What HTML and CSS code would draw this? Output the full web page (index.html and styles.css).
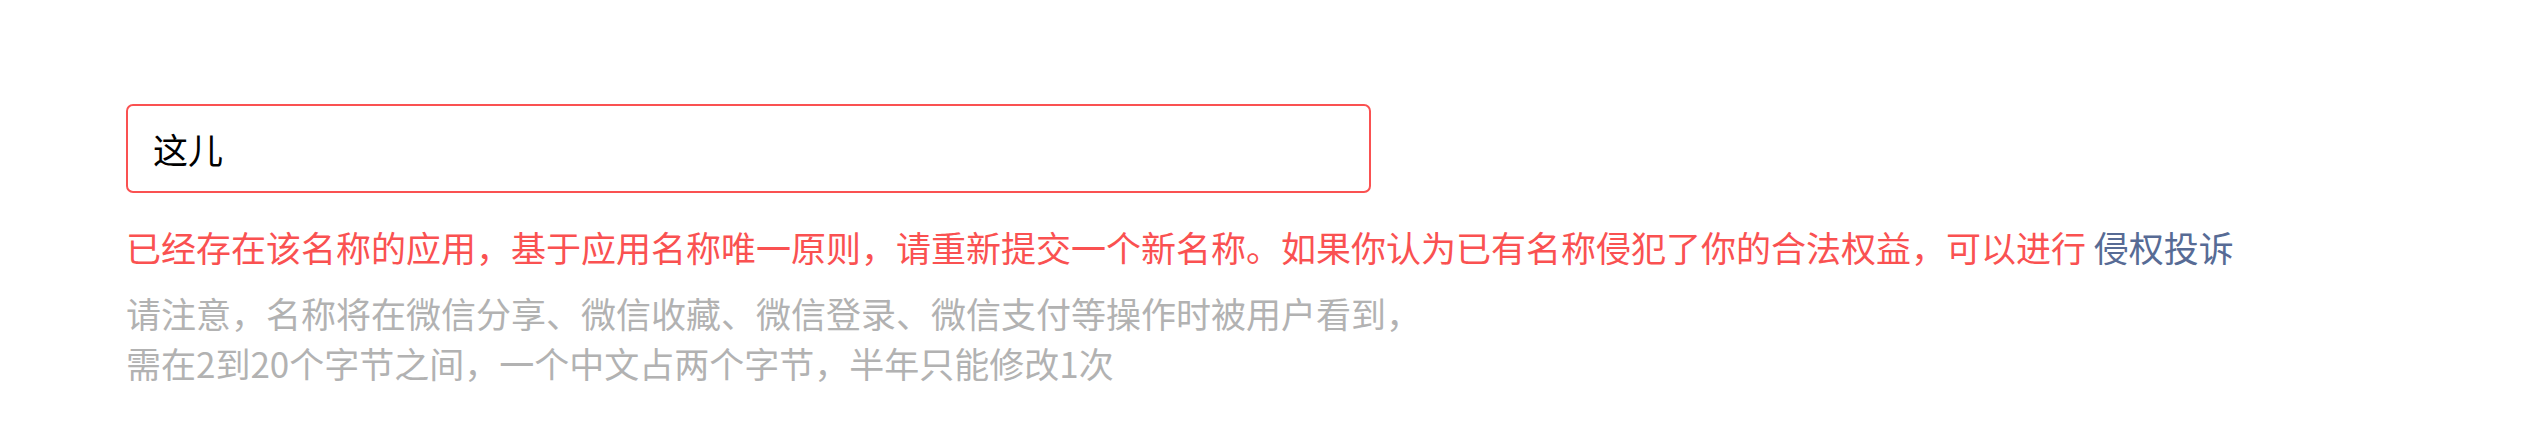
FILE: index.html
```html
<!DOCTYPE html>
<html lang="zh-CN">
<head>
<meta charset="utf-8">
<title>名称</title>
<link rel="stylesheet" href="styles.css">
</head>
<body>
<div class="form">
  <div class="field">
    <input class="field-input" type="text" value="这儿">
  </div>
  <p class="error">已经存在该名称的应用，基于应用名称唯一原则，请重新提交一个新名称。如果你认为已有名称侵犯了你的合法权益，可以进行 <a class="link" href="#">侵权投诉</a></p>
  <p class="tips">请注意，名称将在微信分享、微信收藏、微信登录、微信支付等操作时被用户看到，<br>需在2到20个字节之间，一个中文占两个字节，半年只能修改1次</p>
</div>
</body>
</html>
```
FILE: styles.css
```css
html, body {
  margin: 0;
  padding: 0;
  background: #ffffff;
}
body {
  font-family: "Noto Sans CJK SC", "Noto Sans", sans-serif;
}
.form {
  padding: 104px 0 0 126px;
}
.field {
  width: 1245px;
}
.field-input {
  box-sizing: border-box;
  display: block;
  width: 100%;
  height: 89px;
  margin: 0;
  padding: 0 25px;
  border: 2px solid #fa5151;
  border-radius: 7px;
  outline: none;
  background: #fff;
  color: #000;
  font-family: "Noto Sans CJK SC", "Noto Sans", sans-serif;
  font-size: 35px;
  caret-color: transparent;
}
.error {
  margin: 29px 0 0 0;
  font-size: 35px;
  line-height: 50px;
  color: #fa5151;
  white-space: nowrap;
}
.link {
  color: #576b95;
  text-decoration: none;
}
.tips {
  margin: 16px 0 0 0;
  font-size: 35px;
  line-height: 50px;
  color: #b2b2b2;
  white-space: nowrap;
}
```
